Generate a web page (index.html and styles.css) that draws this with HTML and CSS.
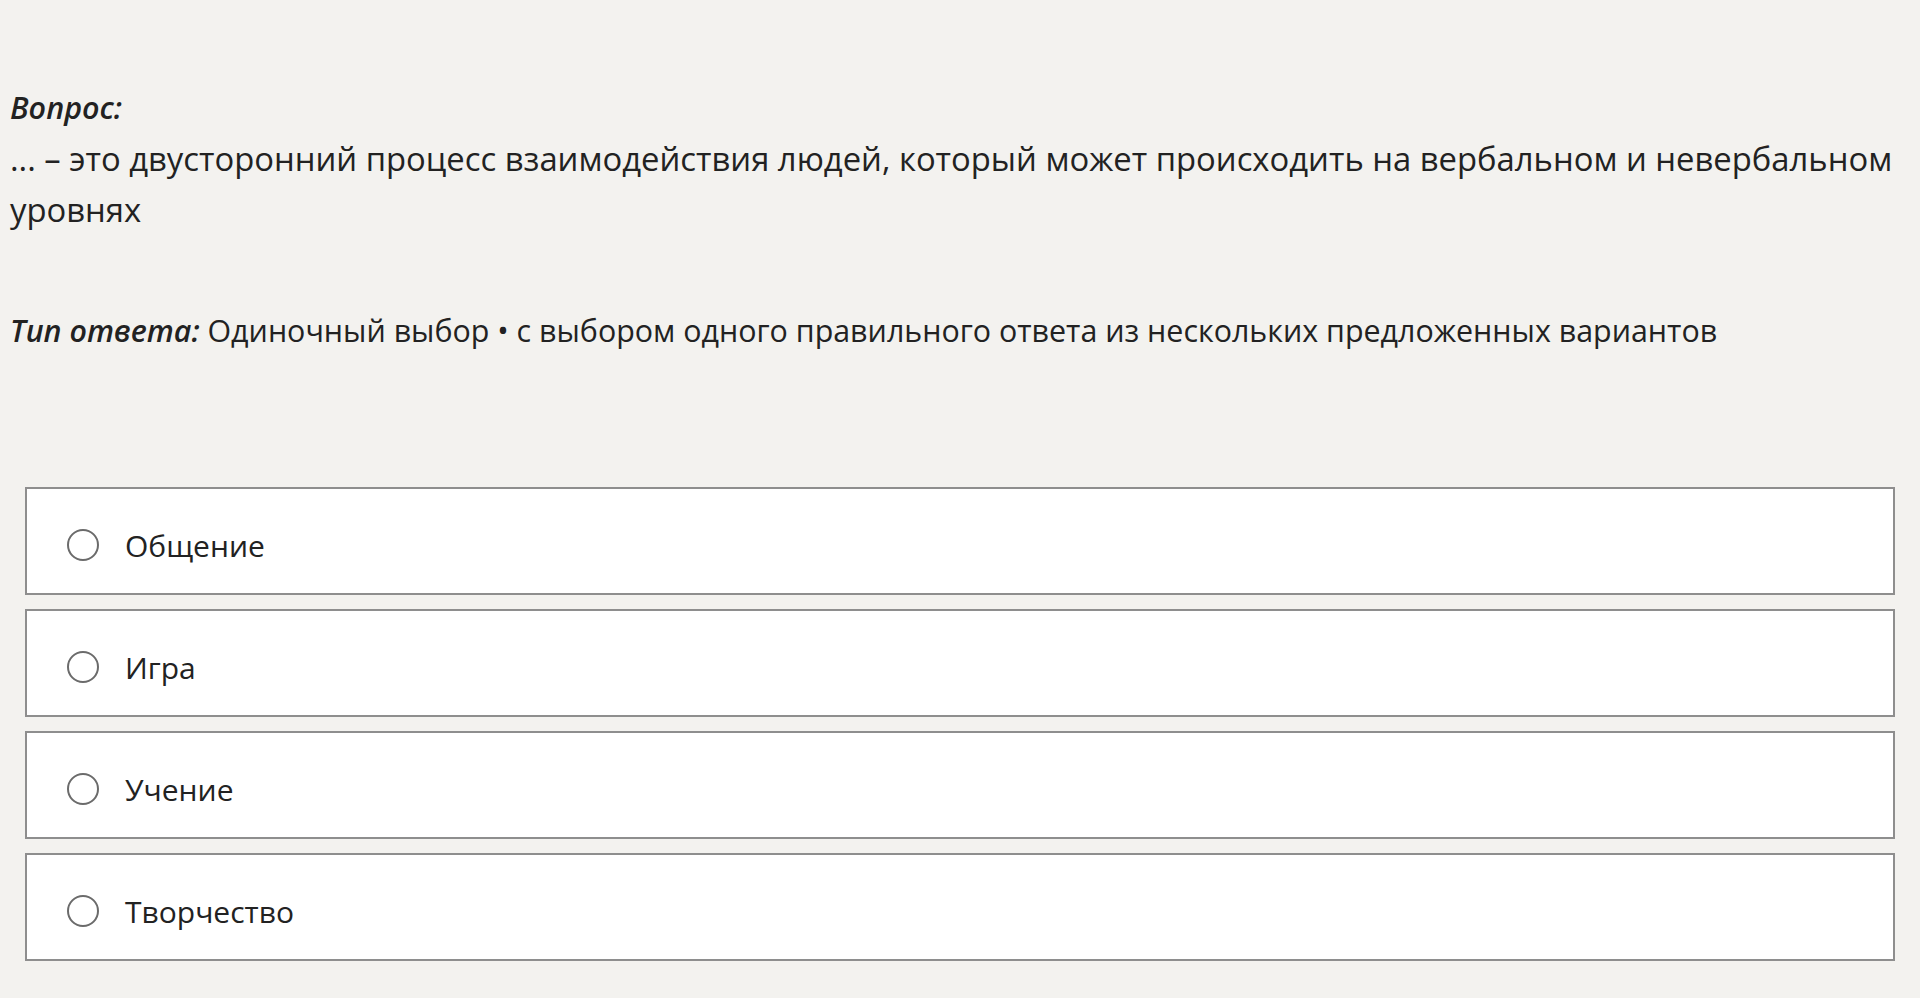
FILE: index.html
```html
<!DOCTYPE html>
<html lang="ru">
<head>
    <meta charset="UTF-8">
    <meta name="viewport" content="width=device-width, initial-scale=1.0">
    <title>Вопрос</title>
    <link rel="stylesheet" href="styles.css">
</head>
<body>
    <!-- Вопрос -->
    <div class="question">
        <div class="question__label">Вопрос:</div>
        <div class="question__text">... – это двусторонний процесс взаимодействия людей, который может происходить на вербальном и невербальном уровнях</div>
        <div class="question__type"><span class="question__type-label">Тип ответа:</span> Одиночный выбор • с выбором одного правильного ответа из нескольких предложенных вариантов</div>
    </div>

    <!-- Варианты ответа -->
    <div class="answers">
        <label class="answer">
            <span class="answer__radio"></span>
            <span class="answer__text">Общение</span>
        </label>
        <label class="answer">
            <span class="answer__radio"></span>
            <span class="answer__text">Игра</span>
        </label>
        <label class="answer">
            <span class="answer__radio"></span>
            <span class="answer__text">Учение</span>
        </label>
        <label class="answer">
            <span class="answer__radio"></span>
            <span class="answer__text">Творчество</span>
        </label>
    </div>
</body>
</html>
```

FILE: styles.css
```css
* {
    margin: 0;
    padding: 0;
    box-sizing: border-box;
    font-family: "Open Sans", "Noto Sans", sans-serif;
}

body {
    background: #f3f2ef;
    color: #222;
    padding: 0 10px;
}

/* Вопрос */
.question {
    padding-top: 82px;
    font-size: 32.8px;
    line-height: 51px;
}

.question__label,
.question__type-label {
    font-weight: 600;
    font-style: italic;
}

.question__label {
    font-size: 30.5px;
}

.question__type {
    margin-top: 70px;
    font-size: 30.4px;
}

/* Варианты ответа */
.answers {
    display: flex;
    flex-direction: column;
    gap: 14px;
    padding: 0 15px;
    margin-top: 131px;
}

.answer {
    display: flex;
    align-items: center;
    gap: 26px;
    height: 108px;
    padding: 8px 0 0 40px;
    background: #fff;
    border: 2px solid #8e8e8e;
    font-size: 30px;
    cursor: pointer;
}

.answer__radio {
    width: 32px;
    height: 32px;
    border: 2px solid #6b6b6b;
    border-radius: 50%;
    flex-shrink: 0;
}
```
